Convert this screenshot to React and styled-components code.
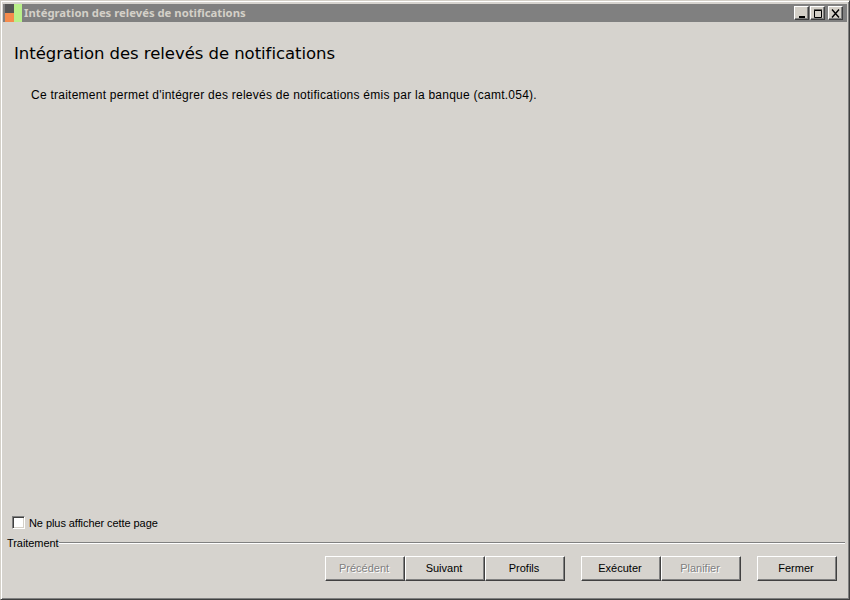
import React from 'react';
import styled, { createGlobalStyle } from 'styled-components';

const Global = createGlobalStyle`
    html, body {
        margin: 0;
        padding: 0;
        background: #d4d0c8;
    }
`
const Window = styled.div`
    box-sizing: border-box;
    width: 850px;
    height: 600px;
    display: flex;
    flex-direction: column;
    background: #d6d3ce;
    padding: 1px;
    border-style: solid;
    border-width: 1px;
    border-color: #d4d0c8 #404040 #404040 #d4d0c8;
    box-shadow: inset 1px 1px 0 #fff, inset -1px -1px 0 #808080;
    font-family: "Liberation Sans", sans-serif;
    color: #000;
`
const TitleBar = styled.div`
    height: 18px;
    margin: 2px 1px 0;
    padding: 0 4px 0 2px;
    display: flex;
    align-items: center;
    background: #808080;
`
const AppIcon = styled.svg`
    width: 17px;
    height: 18px;
    flex: none;
`
const TitleText = styled.span`
    margin: 0 0 2px 2px;
    font: bold 11.3px "Noto Sans", sans-serif;
    color: #d4d0c8;
    white-space: nowrap;
`
const Controls = styled.div`
    margin-left: auto;
    display: flex;
    align-items: center;
`
const ControlButton = styled.div`
    box-sizing: border-box;
    width: 15px;
    height: 14px;
    margin-left: ${p => p.$gap || 0}px;
    display: flex;
    align-items: center;
    justify-content: center;
    background: #d4d0c8;
    border-style: solid;
    border-width: 1px;
    border-color: #fff #404040 #404040 #fff;
    box-shadow: inset -1px -1px 0 #808080;
`
const Content = styled.div`
    flex: 1;
    display: flex;
    flex-direction: column;
    padding: 0 10px;
`
const Heading = styled.h1`
    margin: 21px 0 0 2px;
    font: normal 16.5px/22px "DejaVu Sans", sans-serif;
    letter-spacing: -0.05px;
`
const Intro = styled.p`
    margin: 22px 0 0 19px;
    font: normal 12px/16px "Liberation Sans", sans-serif;
    letter-spacing: 0.25px;
`
const CheckRow = styled.label`
    margin-top: auto;
    display: flex;
    align-items: center;
    gap: 4px;
    height: 14px;
    font: normal 11px/14px "Liberation Sans", sans-serif;
    letter-spacing: -0.07px;
`
const CheckBox = styled.span`
    box-sizing: border-box;
    width: 13px;
    height: 13px;
    margin-bottom: 2px;
    background: #fff;
    border-style: solid;
    border-width: 1px;
    border-color: #808080 #fff #fff #808080;
    box-shadow: inset 1px 1px 0 #404040, inset -1px -1px 0 #d4d0c8;
`
const Group = styled.div`
    margin: 6px -7px 0 -5px;
    display: flex;
    align-items: center;
    height: 14px;
    font: normal 11px/14px "Liberation Sans", sans-serif;
    letter-spacing: -0.07px;
`
const GroupRule = styled.span`
    flex: 1;
    height: 1px;
    margin: 0 0 2px 1px;
    background: #808080;
    box-shadow: 0 1px 0 #fff;
`
const ButtonBar = styled.div`
    display: flex;
    justify-content: flex-end;
    margin: 6px 0 17px;
    padding-right: 1px;
`
const Button = styled.div`
    box-sizing: border-box;
    width: 80px;
    height: 25px;
    margin-left: ${p => p.$gap || 0}px;
    padding: 0 2px 1px 0;
    display: flex;
    align-items: center;
    justify-content: center;
    background: #d6d3ce;
    border-style: solid;
    border-width: 1px;
    border-color: #fff #404040 #404040 #fff;
    box-shadow: inset -1px -1px 0 #808080;
    font: normal 11px "Liberation Sans", sans-serif;
    color: ${p => p.$disabled ? '#808080' : '#000'};
    text-shadow: ${p => p.$disabled ? '1px 1px 0 #fff' : 'none'};
`

function App() {
    return (
        <>
            <Global />
            <Window>
                <TitleBar>
                    <AppIcon viewBox="0 0 17 18">
                        <rect x="0" y="0" width="9" height="9" fill="#555" />
                        <rect x="0" y="9" width="9" height="9" fill="#f58b4c" />
                        <rect x="9" y="0" width="8" height="18" fill="#b9f08a" />
                    </AppIcon>
                    <TitleText>Intégration des relevés de notifications</TitleText>
                    <Controls>
                        <ControlButton>
                            <svg width="10" height="9" viewBox="0 0 10 9"><rect x="2" y="7" width="6" height="2" fill="#000" /></svg>
                        </ControlButton>
                        <ControlButton $gap={1}>
                            <svg width="10" height="9" viewBox="0 0 10 9"><path d="M1.5 1.5H8.5V8.5H1.5Z M1 1H9" fill="none" stroke="#000" /></svg>
                        </ControlButton>
                        <ControlButton $gap={3}>
                            <svg width="10" height="9" viewBox="0 0 10 9"><path d="M1 0.5L8 8.5M8 0.5L1 8.5" fill="none" stroke="#000" strokeWidth="1.4" /></svg>
                        </ControlButton>
                    </Controls>
                </TitleBar>
                <Content>
                    <Heading>Intégration des relevés de notifications</Heading>
                    <Intro>Ce traitement permet d'intégrer des relevés de notifications émis par la banque (camt.054).</Intro>
                    <CheckRow>
                        <CheckBox />
                        Ne plus afficher cette page
                    </CheckRow>
                    <Group>
                        Traitement
                        <GroupRule />
                    </Group>
                    <ButtonBar>
                        <Button $disabled>Précédent</Button>
                        <Button>Suivant</Button>
                        <Button>Profils</Button>
                        <Button $gap={16}>Exécuter</Button>
                        <Button $disabled>Planifier</Button>
                        <Button $gap={16}>Fermer</Button>
                    </ButtonBar>
                </Content>
            </Window>
        </>
    )
}

export default App;
